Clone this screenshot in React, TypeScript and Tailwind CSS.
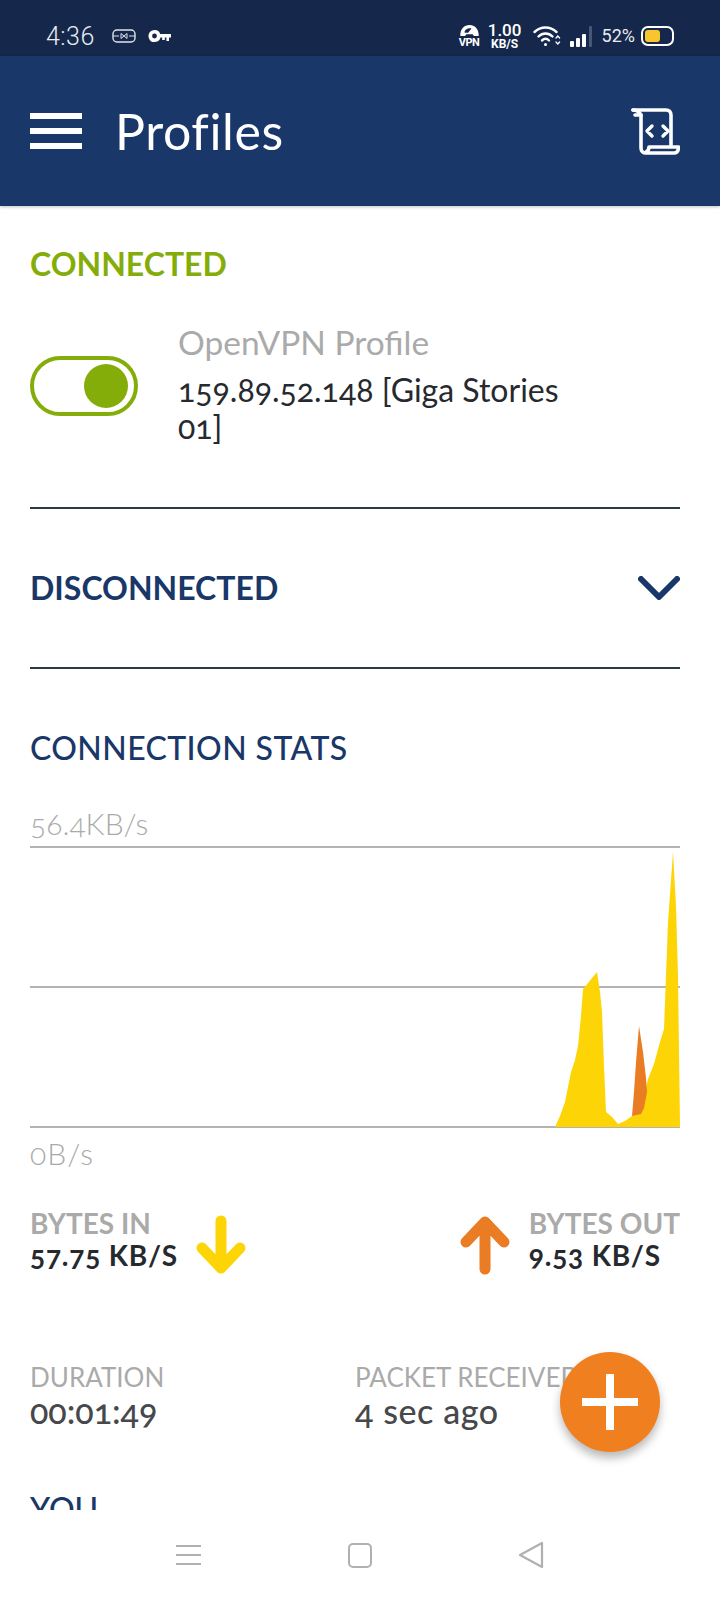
const raleway = { fontFamily: "Lato, 'Noto Sans', sans-serif" };

function StatusBar() {
  return (
    <div className="flex h-14 shrink-0 items-center justify-between bg-[#15274a] pl-[46px] pr-[46px] pt-[16px] text-white" style={{ fontFamily: "Roboto, sans-serif" }}>
      <div className="flex items-center">
        <span className="text-[25px] font-light leading-none tracking-[0.5px] text-[#e8ecf2]">4:36</span>
        <svg className="ml-[17px]" width="24" height="14" viewBox="0 0 24 14" fill="none" stroke="#dfe4ec" strokeWidth="1.4">
          <rect x="1" y="1" width="22" height="12" rx="4" />
          <path d="M1 7h6M17 7h6M9 4.5v5M15 4.5v5M9 4.5l3 2.5M15 4.5l-3 2.5M9 9.5l3-2.5M15 9.5l-3-2.5" strokeWidth="1" />
        </svg>
        <svg className="ml-[12px]" width="23" height="14" viewBox="0 0 23 14" fill="#fff">
          <path fillRule="evenodd" d="M6.5 1a6 6 0 1 1-5.6 8.2A6 6 0 0 1 6.5 1zm0 3.6a2.4 2.4 0 1 0 0 4.8 2.4 2.4 0 0 0 0-4.8z" />
          <path d="M11 5h12v3.4h-2V12h-2.6V8.4h-1.6V11h-2.6V8.4H11z" />
        </svg>
      </div>
      <div className="flex items-center">
        <div className="flex w-[21px] flex-col items-center">
          <svg width="21" height="11" viewBox="0 0 21 12" fill="#fff">
            <path fillRule="evenodd" d="M10.5 0C4.7 0 .5 4.6.5 10.5V12h5.2l1.3-2h7l1.3 2h5.2v-1.500C20.500 4.600 16.300 0 10.500 0zM5 7.500c1-2.700 3-4 5.500-4 .8 0 1.600.1 2.200.4L9 8.500H5.500z" />
          </svg>
          <span className="mt-[1px] text-[11px] font-bold leading-[11px] tracking-[-0.5px]">VPN</span>
        </div>
        <div className="ml-[9px] flex w-[32px] flex-col items-center font-medium">
          <span className="text-[17px] font-medium leading-[16px]">1.00</span>
          <span className="text-[12px] font-bold leading-[12px]">KB/S</span>
        </div>
        <svg className="ml-[12px]" width="28" height="22" viewBox="0 0 28 22" fill="none" stroke="#fff" strokeWidth="2.4" strokeLinecap="round">
          <path d="M1.500 7C8 1 17 1 23.500 7" />
          <path d="M5.500 11.500C9.500 7.500 15.500 7.500 19.500 11.500" />
          <path d="M9 15.500c2.200-2 5-2 7 0" />
          <circle cx="12.500" cy="19.500" r="1.500" fill="#fff" stroke="none" />
          <path d="M24 13l1.800-2 1.800 2M24 17l1.800 2 1.800-2" strokeWidth="1.300" transform="translate(-1 0)" />
        </svg>
        <div className="ml-[9px] flex h-[21px] items-end gap-[2px]">
          <span className="h-[6px] w-[4px] rounded-[1px] bg-white" />
          <span className="h-[9px] w-[4px] rounded-[1px] bg-white" />
          <span className="h-[13px] w-[4px] rounded-[1px] bg-white" />
          <span className="ml-[1px] h-[21px] w-[3px] rounded-[1px] bg-[#46587a]" />
        </div>
        <span className="ml-[10px] text-[18px] font-normal leading-none text-[#e8ecf2]">52%</span>
        <div className="ml-[6px] flex h-[20px] w-[33px] items-center rounded-[7px] border-2 border-white p-[2px]">
          <div className="h-full w-[15px] rounded-[3px] bg-[#f7c62f]" />
        </div>
      </div>
    </div>
  );
}

function Header() {
  return (
    <div className="relative z-10 flex h-[150px] shrink-0 items-center justify-between bg-[#193768] pl-[30px] pr-[40px] shadow-[0_1px_3px_rgba(0,0,0,0.25)]">
      <div className="flex items-center">
        <div className="flex w-[52px] flex-col gap-[9px]">
          <span className="h-[6px] bg-white" />
          <span className="h-[6px] bg-white" />
          <span className="h-[6px] bg-white" />
        </div>
        <span className="ml-[33px] text-[50px] font-normal leading-none tracking-[0.6px] text-white" style={raleway}>Profiles</span>
      </div>
      <svg width="50" height="50" viewBox="0 0 50 50" fill="none" stroke="#fff" strokeWidth="3.600" strokeLinejoin="round" strokeLinecap="round">
        <path d="M3 4h33c3 0 5 2 5 5v30" />
        <path d="M3 4c3 0 6 1.500 8 5h-6" />
        <path d="M11 9v33c0 3 2 5 5 5h28c3 0 4.500-2 4.500-6H19c0 2.500-1 4-3 5" />
        <path d="M22 20l-5 5 5 5M33 20l5 5-5 5" strokeWidth="3.400" />
      </svg>
    </div>
  );
}

function Chart() {
  return (
    <svg className="block" width="650" height="283" viewBox="0 0 650 283">
      <path d="M0 1h650M0 141h650M0 281h650" stroke="#9b9b9b" strokeWidth="1.600" fill="none" />
      <path
        d="M525 281L530 270L535 256L541 226L545 214L548 200L551 170L553 143L558 137L567 126L570 146L572 166L574 220L576 266L582 271L588 278L595 275L602 270L610 266L614 250L618 233L624 218L630 196L634 183L636 130L638 76L643 6L646 60L648 130L650 281Z"
        fill="#fdd406"
      />
      <path d="M602 270L604 246L606 216L609 180L613 206L616 232L617 246L614 262L611 268Z" fill="#ea7c23" />
    </svg>
  );
}

function ArrowIcon({ color, up }: { color: string; up?: boolean }) {
  return (
    <svg width="50" height="60" viewBox="0 0 50 60" fill="none" stroke={color} strokeWidth="11" strokeLinecap="round" strokeLinejoin="round">
      {up ? <path d="M25 54V7M6 27L25 7l19 20" /> : <path d="M25 6v47M6 33l19 20 19-20" />}
    </svg>
  );
}

export default function App() {
  return (
    <div className="flex h-[1600px] w-[720px] flex-col overflow-hidden bg-white" style={raleway}>
      <StatusBar />
      <Header />
      <main className="relative h-[1304px] shrink-0 overflow-hidden bg-white pl-[30px] pr-[40px] [font-variant-numeric:oldstyle-nums]">
        <h2 className="mt-[40px] text-[32px] font-bold leading-[36px] text-[#85ad0a]">CONNECTED</h2>
        <div className="mt-[40px] flex">
          <div className="mt-[34px] flex h-[60px] w-[108px] shrink-0 items-center justify-end rounded-full border-[4px] border-[#85ad0a] pr-[6px]">
            <div className="h-[44px] w-[44px] rounded-full bg-[#85ad0a]" />
          </div>
          <div className="ml-[40px] w-[400px]">
            <p className="text-[33.5px] leading-[40px] text-[#aaaaaa]">OpenVPN Profile</p>
            <p className="mt-[9px] text-[32px] leading-[37px] text-[#26292e]">159.89.52.148 [Giga Stories<br />01]</p>
          </div>
        </div>

        <div className="mt-[62px] border-t-2 border-[#2a3a44]" />
        <div className="flex h-[160px] items-center justify-between border-b-2 border-[#2a3a44]">
          <span className="text-[32px] font-bold leading-none text-[#193768]">DISCONNECTED</span>
          <svg width="42" height="24" viewBox="0 0 42 24" fill="none" stroke="#193768" strokeWidth="6" strokeLinecap="round" strokeLinejoin="round">
            <path d="M3 3l18 18L39 3" />
          </svg>
        </div>

        <h2 className="mt-[61px] text-[32px] font-medium leading-[36px] tracking-[0.4px] text-[#193768]">CONNECTION STATS</h2>
        <p className="mt-[40px] text-[30px] font-light leading-[34px] text-[#aaaaaa]">56.4KB/s</p>
        <div className="mt-[6px]">
          <Chart />
        </div>
        <p className="mt-[7px] text-[30px] font-light leading-[34px] tracking-[1px] text-[#aaaaaa]">0B/s</p>

        <div className="mt-[37px] flex justify-between">
          <div className="flex">
            <div>
              <p className="text-[28px] font-bold leading-[32px] text-[#aaaaaa]">BYTES IN</p>
              <p className="text-[28px] font-bold leading-[32px] tracking-[0.8px] text-[#26292e]">57.75 KB/S</p>
            </div>
            <div className="ml-[18px] mt-[8px]">
              <ArrowIcon color="#fdd406" />
            </div>
          </div>
          <div className="flex">
            <div className="mr-[19px] mt-[8px]">
              <ArrowIcon color="#ea7c23" up />
            </div>
            <div>
              <p className="text-[28px] font-bold leading-[32px] text-[#aaaaaa]">BYTES OUT</p>
              <p className="text-[28px] font-bold leading-[32px] tracking-[0.8px] text-[#26292e]">9.53 KB/S</p>
            </div>
          </div>
        </div>

        <div className="mt-[85px] flex">
          <div className="w-[325px]">
            <p className="text-[26px] leading-[34px] text-[#aaaaaa]">DURATION</p>
            <p className="text-[34px] font-medium leading-[34px] text-[#46484c]">00:01:49</p>
          </div>
          <div className="whitespace-nowrap">
            <p className="text-[26px] leading-[34px] text-[#aaaaaa]">PACKET RECEIVED</p>
            <p className="text-[34px] font-medium leading-[34px] tracking-[0.6px] text-[#46484c]">4 sec ago</p>
          </div>
        </div>

        <p className="mt-[63px] text-[32px] font-medium leading-[36px] text-[#193768]">YOU</p>

        <button className="absolute left-[560px] top-[1146px] flex h-[100px] w-[100px] items-center justify-center rounded-full bg-[#f0801f] shadow-[0_6px_10px_rgba(0,0,0,0.28)]">
          <svg width="56" height="56" viewBox="0 0 56 56" fill="#fff">
            <path d="M24 0h8v24h24v8H32v24h-8V32H0v-8h24z" />
          </svg>
        </button>
      </main>
      <nav className="flex h-[90px] shrink-0 items-center justify-center bg-white">
        <div className="flex w-[368px] items-center justify-between">
          <div className="flex w-[25px] flex-col gap-[7px]">
            <span className="h-[2px] bg-[#b0b0b0]" />
            <span className="h-[2px] bg-[#b0b0b0]" />
            <span className="h-[2px] bg-[#b0b0b0]" />
          </div>
          <div className="h-[25px] w-[24px] rounded-[5px] border-2 border-[#b0b0b0]" />
          <svg width="26" height="28" viewBox="0 0 26 28" fill="none" stroke="#b0b0b0" strokeWidth="2.200" strokeLinejoin="round">
            <path d="M24 2v24L2 14z" />
          </svg>
        </div>
      </nav>
    </div>
  );
}
